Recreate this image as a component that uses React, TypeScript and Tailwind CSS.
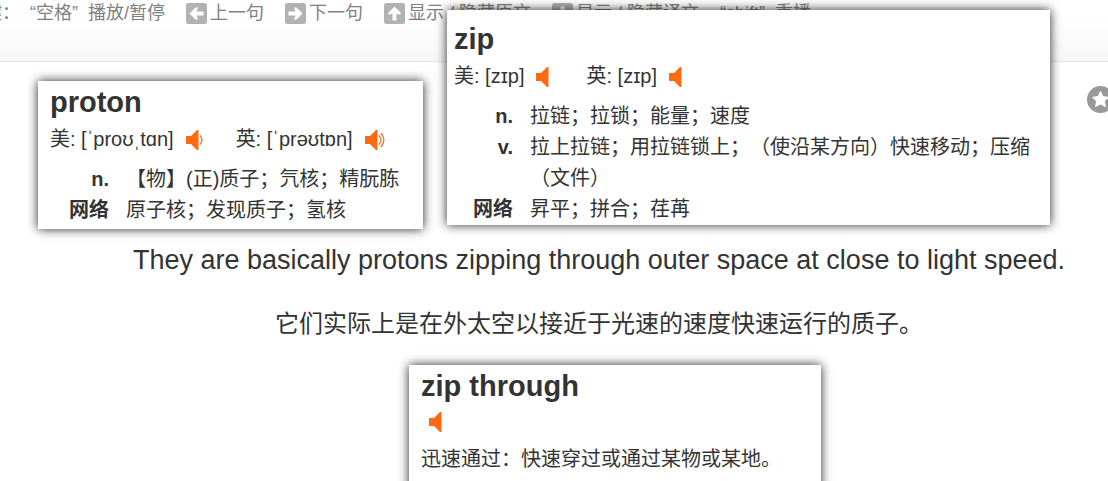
import type { ReactNode } from "react";

const arrows = {
  left: "M3.5 10.5L9.5 4.5H12L10.5 8.5H17.5V12.5H10.5L12 16.5H9.5Z",
  right: "M17.5 10.5L11.5 4.5H9L10.5 8.5H3.5V12.5H10.5L9 16.5H11.5Z",
  up: "M10.5 3.5L16.5 9.5V12L12.5 10.5V17.5H8.5V10.5L4.5 12V9.5Z",
  down: "M10.5 17.5L16.5 11.5V9L12.5 10.5V3.5H8.5V10.5L4.5 9V11.5Z",
};

function KeyIcon({ dir }: { dir: keyof typeof arrows }) {
  return (
    <svg className="h-[21px] w-[21px] shrink-0" viewBox="0 0 21 21" aria-hidden="true">
      <rect width="21" height="21" rx="2.5" fill="#b2b2b2" />
      <path d={arrows[dir]} fill="#fff" />
    </svg>
  );
}

function Hint({ dir, children }: { dir: keyof typeof arrows; children: ReactNode }) {
  return (
    <span className="flex items-center gap-[3px]">
      <KeyIcon dir={dir} />
      {children}
    </span>
  );
}

function Speaker({ waves = 0, label }: { waves?: number; label: string }) {
  return (
    <button type="button" aria-label={label} className="flex h-5 w-5 shrink-0">
      <svg className="h-5 w-5" viewBox="0 0 20 20" aria-hidden="true">
        <path d="M0 6H5L11 0H12.5V20H11L5 14H0Z" fill="#ff6a10" />
        <g fill="none" stroke="#ff6a10" strokeWidth="1.2">
          {waves > 0 && <path d="M14 5.5Q18 10 14 14.5" />}
          {waves > 1 && <path d="M15.8 3Q22 10 15.8 17" />}
        </g>
      </svg>
    </button>
  );
}

function Sound({ text, waves, label }: { text: string; waves?: number; label: string }) {
  return (
    <span className="flex items-center gap-3">
      {text}
      <Speaker waves={waves} label={label} />
    </span>
  );
}

function Sense({ label, children }: { label: string; children: ReactNode }) {
  return (
    <div className="flex gap-[17px]">
      <dt className="w-[59px] shrink-0 text-right font-bold">{label}</dt>
      <dd>{children}</dd>
    </div>
  );
}

const card =
  "absolute bg-white text-[20px] leading-[31px] shadow-[0_0_10px_rgba(0,0,0,0.85)]";
const title = "text-[29px] leading-[42px] font-bold";
const sounds = "mb-2 flex gap-[30px] leading-[33px]";

export default function App() {
  return (
    <div className="relative h-screen overflow-hidden bg-white font-['Liberation_Sans','Noto_Sans_CJK_SC',sans-serif] text-[#333] [text-spacing-trim:space-all]" lang="zh-CN">
      <header className="flex h-[62px] border-b border-[#e5e5e5] bg-linear-to-b from-white from-30% to-[#f7f7f7] pt-[3px] text-[18px] text-[#808080]">
        <div className="-ml-4 flex h-[21px] items-center gap-[21px] whitespace-nowrap">
          <span className="flex gap-[10px]">
            <span>键：</span>
            <span>“空格”</span>
            <span>播放/暂停</span>
          </span>
          <Hint dir="left">上一句</Hint>
          <Hint dir="right">下一句</Hint>
          <Hint dir="up">显示 / 隐藏原文</Hint>
          <Hint dir="down">显示 / 隐藏译文</Hint>
          <span className="flex gap-[10px]">
            <span>“shift”</span>
            <span>重播</span>
          </span>
        </div>
      </header>

      <main>
        <div className="-mr-[6px] flex justify-end pt-6">
          <button type="button" aria-label="收藏" className="h-[27px] w-[27px]">
            <svg viewBox="0 0 27 27" aria-hidden="true">
              <circle cx="13.5" cy="13.5" r="13.5" fill="#999" />
              <path d="M13.5 5.5L15.9 10.6L21.4 11.3L17.4 15.1L18.4 20.6L13.5 18L8.6 20.6L9.6 15.1L5.6 11.3L11.1 10.6Z" fill="#fff" stroke="#fff" strokeLinejoin="round" />
            </svg>
          </button>
        </div>
        <div className="mt-[127px] pl-[90px] text-center whitespace-nowrap">
          <p className="text-[27px] leading-10">
            They are basically protons zipping through outer space at close to light speed.
          </p>
          <p className="mt-6 text-[24px] leading-10">
            它们实际上是在外太空以接近于光速的速度快速运行的质子。
          </p>
        </div>
      </main>

      <section className={`${card} top-[81px] left-[38px] w-[385px] px-3 pb-[3px]`}>
        <h2 className={title}>proton</h2>
        <div className={sounds}>
          <Sound text="美: [ˈproʊˌtɑn]" waves={1} label="美式发音" />
          <Sound text="英: [ˈprəʊtɒn]" waves={2} label="英式发音" />
        </div>
        <dl>
          <Sense label="n.">【物】(正)质子；氕核；精朊胨</Sense>
          <Sense label="网络">原子核；发现质子；氢核</Sense>
        </dl>
      </section>

      <section className={`${card} top-[10px] left-[447px] w-[603px] px-[7px] pt-2`}>
        <h2 className={title}>zip</h2>
        <div className={sounds}>
          <Sound text="美: [zɪp]" label="美式发音" />
          <Sound text="英: [zɪp]" label="英式发音" />
        </div>
        <dl>
          <Sense label="n.">拉链；拉锁；能量；速度</Sense>
          <Sense label="v.">拉上拉链；用拉链锁上；（使沿某方向）快速移动；压缩（文件）</Sense>
          <Sense label="网络">昇平；拼合；荏苒</Sense>
        </dl>
      </section>

      <section className={`${card} top-[365px] left-[409px] w-[412px] px-3 pb-4`}>
        <h2 className={title}>zip through</h2>
        <div className="mb-2 flex h-[29px] items-center pl-2">
          <Speaker label="发音" />
        </div>
        <p>迅速通过：快速穿过或通过某物或某地。</p>
      </section>
    </div>
  );
}
